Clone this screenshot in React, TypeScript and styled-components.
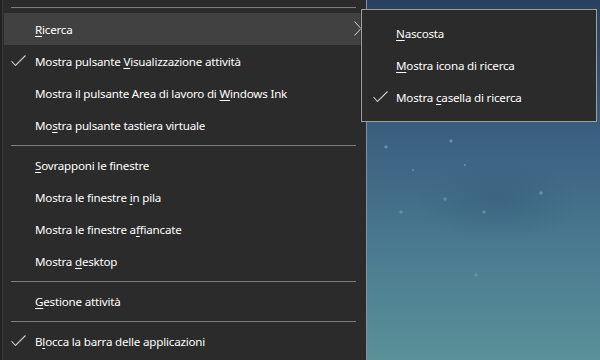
import * as React from "react";
import styled, { createGlobalStyle } from "styled-components";

const GlobalStyle = createGlobalStyle`
  html, body {
    margin: 0;
    padding: 0;
    width: 600px;
    height: 360px;
    overflow: hidden;
    background: #2b2b2b;
  }
  body {
    font-family: "Noto Sans", "Open Sans", sans-serif;
  }
`;

const SScreen = styled.div`
  position: relative;
  width: 600px;
  height: 360px;
  display: flex;
  overflow: hidden;
`;

const SMenu = styled.div`
  width: 364px;
  height: 100%;
  flex-shrink: 0;
  display: flex;
  flex-direction: column;
  background: #2b2b2b;
  border-left: 2px solid #222222;
  border-right: 1px solid #8f8f8f;
  box-shadow: inset 1px 0 0 #3a3a3a;
`;

// wallpaper: gradient sky with a few faint stars
const SDesktop = styled.div`
  flex: 1;
  background:
    radial-gradient(circle at 19px 147px, rgba(190, 215, 230, 0.35) 0 1.3px, transparent 2px),
    radial-gradient(circle at 84px 141px, rgba(190, 215, 230, 0.35) 0 1.3px, transparent 2px),
    radial-gradient(circle at 98px 165px, rgba(190, 215, 230, 0.3) 0 1px, transparent 1.6px),
    radial-gradient(circle at 46px 170px, rgba(190, 215, 230, 0.25) 0 1px, transparent 1.6px),
    radial-gradient(circle at 174px 193px, rgba(190, 215, 230, 0.35) 0 1.3px, transparent 2px),
    radial-gradient(circle at 78px 199px, rgba(190, 215, 230, 0.28) 0 1.3px, transparent 2px),
    radial-gradient(circle at 34px 212px, rgba(190, 215, 230, 0.28) 0 1.3px, transparent 2px),
    radial-gradient(circle at 117px 212px, rgba(190, 215, 230, 0.28) 0 1.3px, transparent 2px),
    radial-gradient(circle at 109px 275px, rgba(190, 215, 230, 0.2) 0 1.3px, transparent 2px),
    radial-gradient(ellipse 110px 55px at 130px 200px, rgba(40, 80, 110, 0.3), transparent 75%),
    linear-gradient(180deg, #28405f 0px, #2f4d6e 60px, #3d6383 150px, #4a7a90 250px, #5a9198 360px);
`;

const SSeparator = styled.div<{ $lead?: boolean }>`
  padding: ${(p) => (p.$lead ? "7px 0 5px" : "4px 0 3px")};
  margin: 0 10px 0 9px;
  &::after {
    content: "";
    display: block;
    height: 1px;
    background: #7d7d7d;
  }
`;

const SItem = styled.div<{ $active?: boolean; $inset?: number }>`
  height: 32px;
  display: flex;
  align-items: center;
  position: relative;
  padding-left: ${(p) => p.$inset ?? 31}px;
  margin-left: 2px;
  color: #ffffff;
  font-size: 11.6px;
  letter-spacing: -0.2px;
  white-space: nowrap;
  background: ${(p) => (p.$active ? "#414141" : "transparent")};
`;

const SCheck = styled.svg<{ $left: number }>`
  position: absolute;
  left: ${(p) => p.$left}px;
  top: 10px;
  width: 15px;
  height: 12px;
`;

const SChevron = styled.svg`
  position: absolute;
  right: 4px;
  top: 8px;
  width: 8px;
  height: 15px;
`;

const SKey = styled.span`
  text-decoration: underline;
  text-underline-offset: 2px;
  text-decoration-thickness: 1px;
`;

const SSubmenu = styled.div`
  position: absolute;
  left: 361px;
  top: 9px;
  width: 234px;
  padding: 7px 0 8px;
  background: #2b2b2b;
  border: 1px solid #a0a0a0;
  display: flex;
  flex-direction: column;
  box-shadow: -1px 0 0 rgba(0, 0, 0, 0.2);
`;

const Check = ({ left }: { left: number }) => (
  <SCheck $left={left} viewBox="0 0 15 12">
    <polyline
      points="0.5,6 4.5,10.5 14.5,0.5"
      fill="none"
      stroke="#cfcfcf"
      strokeWidth="1.1"
    />
  </SCheck>
);

interface Label {
  pre: string;
  key: string;
  post: string;
}

interface Entry {
  label: Label;
  checked?: boolean;
  active?: boolean;
  submenu?: boolean;
}

type Row = Entry | "sep";

const lbl = (pre: string, key: string, post: string): Label => ({ pre, key, post });

const rows: Row[] = [
  { label: lbl("", "R", "icerca"), active: true, submenu: true },
  { label: lbl("Mostra pulsante ", "V", "isualizzazione attività"), checked: true },
  { label: lbl("Mostra il pulsante Area di lavoro di ", "W", "indows Ink") },
  { label: lbl("Mo", "s", "tra pulsante tastiera virtuale") },
  "sep",
  { label: lbl("", "S", "ovrapponi le finestre") },
  { label: lbl("Mostra le finestre ", "i", "n pila") },
  { label: lbl("Mostra le finestre a", "f", "fiancate") },
  { label: lbl("Mostra ", "d", "esktop") },
  "sep",
  { label: lbl("", "G", "estione attività") },
  "sep",
  { label: lbl("B", "l", "occa la barra delle applicazioni"), checked: true },
];

const subRows: Entry[] = [
  { label: lbl("", "N", "ascosta") },
  { label: lbl("", "M", "ostra icona di ricerca") },
  { label: lbl("Mostra ", "c", "asella di ricerca"), checked: true },
];

const Text = ({ label }: { label: Label }) => (
  <span>
    {label.pre}
    <SKey>{label.key}</SKey>
    {label.post}
  </span>
);

const App = () => (
  <>
    <GlobalStyle />
    <SScreen>
      <SMenu>
        <SSeparator $lead />
        {rows.map((r, i) =>
          r === "sep" ? (
            <SSeparator key={i} />
          ) : (
            <SItem key={i} $active={r.active}>
              {r.checked && <Check left={7} />}
              <Text label={r.label} />
              {r.submenu && (
                <SChevron viewBox="0 0 8 15">
                  <polyline
                    points="0.5,0.5 7,7.5 0.5,14.5"
                    fill="none"
                    stroke="#d6d6d6"
                    strokeWidth="1"
                  />
                </SChevron>
              )}
            </SItem>
          )
        )}
      </SMenu>
      <SDesktop />
      <SSubmenu>
        {subRows.map((r, i) => (
          <SItem key={i} $inset={32}>
            {r.checked && <Check left={9} />}
            <Text label={r.label} />
          </SItem>
        ))}
      </SSubmenu>
    </SScreen>
  </>
);

export default App;
